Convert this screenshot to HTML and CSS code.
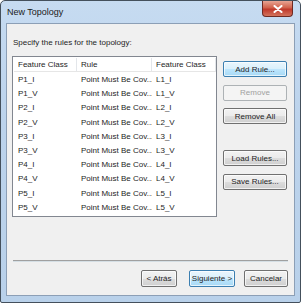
FILE: index.html
```html
<!DOCTYPE html>
<html>
<head>
  <title>New Topology</title>
  <link rel="stylesheet" href="styles.css">
</head>
<body>
  <div class="window">
    <div class="titlebar">
      <span class="title">New Topology</span>
      <div class="close">
        <svg width="10" height="8" viewBox="0 0 10 8">
          <path d="M1.5 1 L8.5 7 M8.5 1 L1.5 7" stroke="#ffffff" stroke-width="2" stroke-linecap="round"/>
        </svg>
      </div>
    </div>

    <div class="client">
      <p class="prompt">Specify the rules for the topology:</p>

      <div class="main">
        <div class="list">
          <div class="row header">
            <span class="col c1">Feature Class</span>
            <span class="col c2">Rule</span>
            <span class="col c3">Feature Class</span>
          </div>
          <div class="row"><span class="col c1">P1_I</span><span class="col c2">Point Must Be Cov...</span><span class="col c3">L1_I</span></div>
          <div class="row"><span class="col c1">P1_V</span><span class="col c2">Point Must Be Cov...</span><span class="col c3">L1_V</span></div>
          <div class="row"><span class="col c1">P2_I</span><span class="col c2">Point Must Be Cov...</span><span class="col c3">L2_I</span></div>
          <div class="row"><span class="col c1">P2_V</span><span class="col c2">Point Must Be Cov...</span><span class="col c3">L2_V</span></div>
          <div class="row"><span class="col c1">P3_I</span><span class="col c2">Point Must Be Cov...</span><span class="col c3">L3_I</span></div>
          <div class="row"><span class="col c1">P3_V</span><span class="col c2">Point Must Be Cov...</span><span class="col c3">L3_V</span></div>
          <div class="row"><span class="col c1">P4_I</span><span class="col c2">Point Must Be Cov...</span><span class="col c3">L4_I</span></div>
          <div class="row"><span class="col c1">P4_V</span><span class="col c2">Point Must Be Cov...</span><span class="col c3">L4_V</span></div>
          <div class="row"><span class="col c1">P5_I</span><span class="col c2">Point Must Be Cov...</span><span class="col c3">L5_I</span></div>
          <div class="row"><span class="col c1">P5_V</span><span class="col c2">Point Must Be Cov...</span><span class="col c3">L5_V</span></div>
        </div>

        <div class="side">
          <button class="btn default">Add Rule...</button>
          <button class="btn" disabled>Remove</button>
          <button class="btn">Remove All</button>
          <button class="btn spaced">Load Rules...</button>
          <button class="btn">Save Rules...</button>
        </div>
      </div>

      <div class="footer">
        <button class="btn small">&lt; Atrás</button>
        <button class="btn small default">Siguiente &gt;</button>
        <button class="btn small last">Cancelar</button>
      </div>
    </div>
  </div>
</body>
</html>
```

FILE: styles.css
```css
body {
  margin: 0;
  padding: 0;
  background-color: #ffffff;
  font-family: "Liberation Sans", Arial, sans-serif;
  font-size: 8px;
  color: #1e1e1e;
}

.window {
  width: 301px;
  height: 303px;
  box-sizing: border-box;
  border: 1px solid #44505c;
  border-radius: 5px 5px 2px 2px;
  background: linear-gradient(to bottom, #c6dbf1 0%, #bcd3ec 40%, #b9d1ea 100%);
  padding: 0 5px 6px 5px;
  display: flex;
  flex-direction: column;
}

.titlebar {
  height: 22px;
  display: flex;
  align-items: center;
  justify-content: space-between;
}

.title {
  font-size: 9px;
  color: #1a1a1a;
  padding-left: 1px;
  margin-top: -1px;
}

.close {
  width: 29px;
  height: 15px;
  margin-top: -6px;
  margin-right: 2px;
  border: 1px solid #6e2a22;
  border-top: none;
  border-radius: 0 0 4px 4px;
  background: linear-gradient(to bottom, #e8a493 0%, #d0614b 45%, #c0392b 55%, #d2735c 100%);
  display: flex;
  align-items: center;
  justify-content: center;
}

.client {
  flex: 1;
  border: 1px solid #8c9fb6;
  background-color: #f0f0f0;
  padding: 0 6px 8px 5px;
  display: flex;
  flex-direction: column;
}

.prompt {
  margin: 14px 0 8px 1px;
  line-height: 10px;
}

.main {
  display: flex;
  align-items: flex-start;
}

.list {
  width: 205px;
  height: 161px;
  border: 1px solid #828790;
  background-color: #ffffff;
  box-sizing: border-box;
  padding: 1px 0 0 1px;
}

.row {
  display: flex;
  height: 14.2px;
  line-height: 14px;
  overflow: hidden;
}

.row.header {
  height: 13px;
  line-height: 13px;
  margin-bottom: 1px;
  border-bottom: 1px solid #e6e6e6;
}

.col {
  box-sizing: border-box;
  padding-left: 4px;
  white-space: nowrap;
  overflow: hidden;
}

.c1 { width: 63px; }
.c2 { width: 75px; }
.c3 { width: 64px; }

.header .col {
  border-right: 1px solid #e3e6ea;
}

.side {
  display: flex;
  flex-direction: column;
  margin-left: 6px;
  margin-top: 5px;
}

.btn {
  font-family: "Liberation Sans", Arial, sans-serif;
  font-size: 8px;
  color: #1e1e1e;
  width: 64px;
  height: 16px;
  padding: 0;
  margin-bottom: 7.5px;
  border: 1px solid #707070;
  border-radius: 2px;
  background: linear-gradient(to bottom, #f2f2f2 0%, #ebebeb 50%, #dddddd 51%, #cfcfcf 100%);
  box-shadow: inset 0 0 0 1px rgba(255, 255, 255, 0.7);
}

.btn.default {
  border-color: #3c7fb1;
  background: linear-gradient(to bottom, #eaf6fd 0%, #d9f0fc 50%, #bee6fd 51%, #a7d9f5 100%);
}

.btn:disabled {
  color: #a0a0a0;
  border-color: #adb2b5;
  background: #f4f4f4;
  box-shadow: none;
}

.btn.spaced {
  margin-top: 18.5px;
}

.footer {
  margin-top: auto;
  border-top: 1px solid #d5dfe5;
  box-shadow: 0 -1px 0 #a0a0a0;
  margin-left: 1px;
  padding-top: 8px;
  display: flex;
  justify-content: flex-end;
}

.btn.small {
  margin-bottom: 0;
  height: 17px;
}

.footer .btn:first-child {
  width: 36px;
}

.footer .btn.default {
  width: 46px;
  margin-left: 12px;
}

.footer .btn.last {
  width: 44px;
  margin-left: 9px;
}
```
